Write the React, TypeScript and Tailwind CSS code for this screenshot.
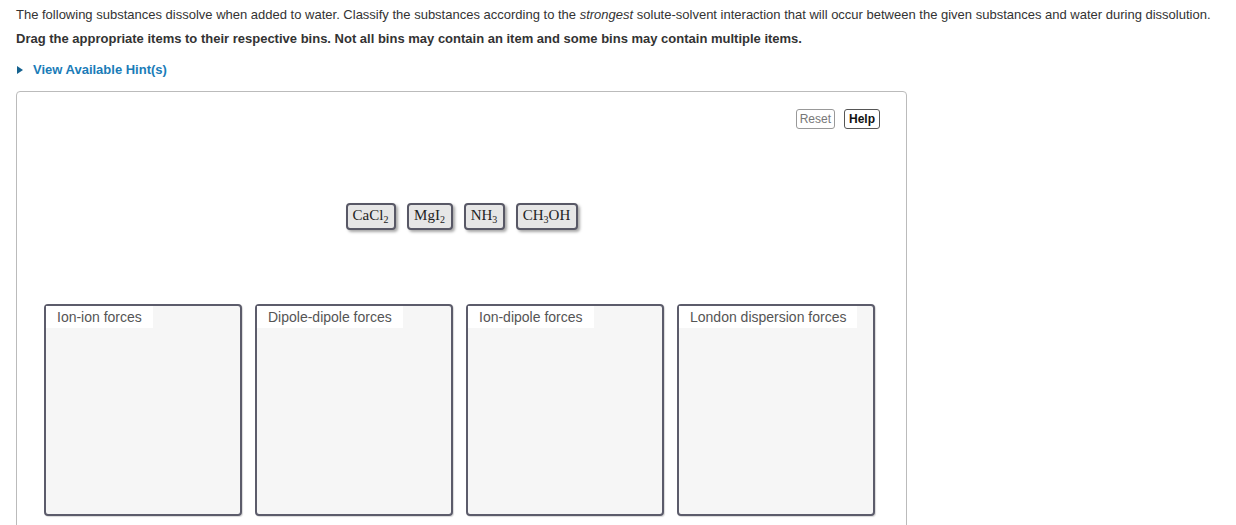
import React from 'react'

const Sub = ({ children }: { children: React.ReactNode }) => (
  <span className="relative top-[3px] text-[10px] leading-none">{children}</span>
)

const tiles: { label: React.ReactNode; w: string }[] = [
  { label: <>CaCl<Sub>2</Sub></>, w: 'w-[50px]' },
  { label: <>MgI<Sub>2</Sub></>, w: 'w-[46px]' },
  { label: <>NH<Sub>3</Sub></>, w: 'w-[41px]' },
  { label: <>CH<Sub>3</Sub>OH</>, w: 'w-[62px]' },
]

const bins = ['Ion-ion forces', 'Dipole-dipole forces', 'Ion-dipole forces', 'London dispersion forces']

export default function App() {
  return (
    <div className="h-[525px] overflow-hidden bg-white pl-4 pt-[6px] font-['Liberation_Sans',Arial,sans-serif] text-[13px] text-[#333]">
      {/* intro */}
      <p className="leading-[18px]">
        The following substances dissolve when added to water. Classify the substances according to the{' '}
        <em>strongest</em> solute-solvent interaction that will occur between the given substances and water during
        dissolution.
      </p>
      <p className="mt-[6px] font-bold leading-[18px]">
        Drag the appropriate items to their respective bins. Not all bins may contain an item and some bins may contain
        multiple items.
      </p>

      {/* hint */}
      <div className="mt-[13px] flex items-center gap-[10px] pl-[1px] font-bold leading-[18px] text-[#1a7cb8]">
        <span className="h-0 w-0 border-y-[4.5px] border-l-[6px] border-y-transparent border-l-[#15628f]" />
        <span>View Available Hint(s)</span>
      </div>

      {/* workspace */}
      <div className="mt-[12px] h-[460px] w-[891px] rounded-[4px] border border-[#bbb] bg-white">
        <div className="flex justify-end gap-[9px] pr-[26px] pt-[17px] text-[12px]">
          <button className="h-[20px] rounded-[3px] border border-[#999] px-[3px] leading-[16px] text-[#777]">
            Reset
          </button>
          <button className="h-[20px] rounded-[3px] border border-[#555] px-[4px] font-bold leading-[16px] text-[#111]">
            Help
          </button>
        </div>

        <div className="mt-[74px] flex justify-center gap-[11px]">
          {tiles.map((t, i) => (
            <div
              key={i}
              className={`${t.w} flex h-[27px] items-center justify-center rounded-[4px] border-2 border-[#585866] bg-[#e6e6e6] font-['Liberation_Serif',serif] text-[15px] text-[#222] shadow-[2px_2px_3px_rgba(0,0,0,0.35)]`}
            >
              <span className="-mt-[2px]">{t.label}</span>
            </div>
          ))}
        </div>

        <div className="mt-[74px] flex gap-[13px] pl-[27px]">
          {bins.map((b) => (
            <div
              key={b}
              className="h-[212px] w-[198px] rounded-[4px] border-2 border-[#5c5c6b] bg-[#f6f6f6] shadow-[1px_1px_1px_rgba(0,0,0,0.15)]"
            >
              <div className="inline-block bg-white px-[11px] pb-[2px] pt-[2px] text-[14px] leading-[18px] text-[#555]">
                {b}
              </div>
            </div>
          ))}
        </div>
      </div>
    </div>
  )
}
